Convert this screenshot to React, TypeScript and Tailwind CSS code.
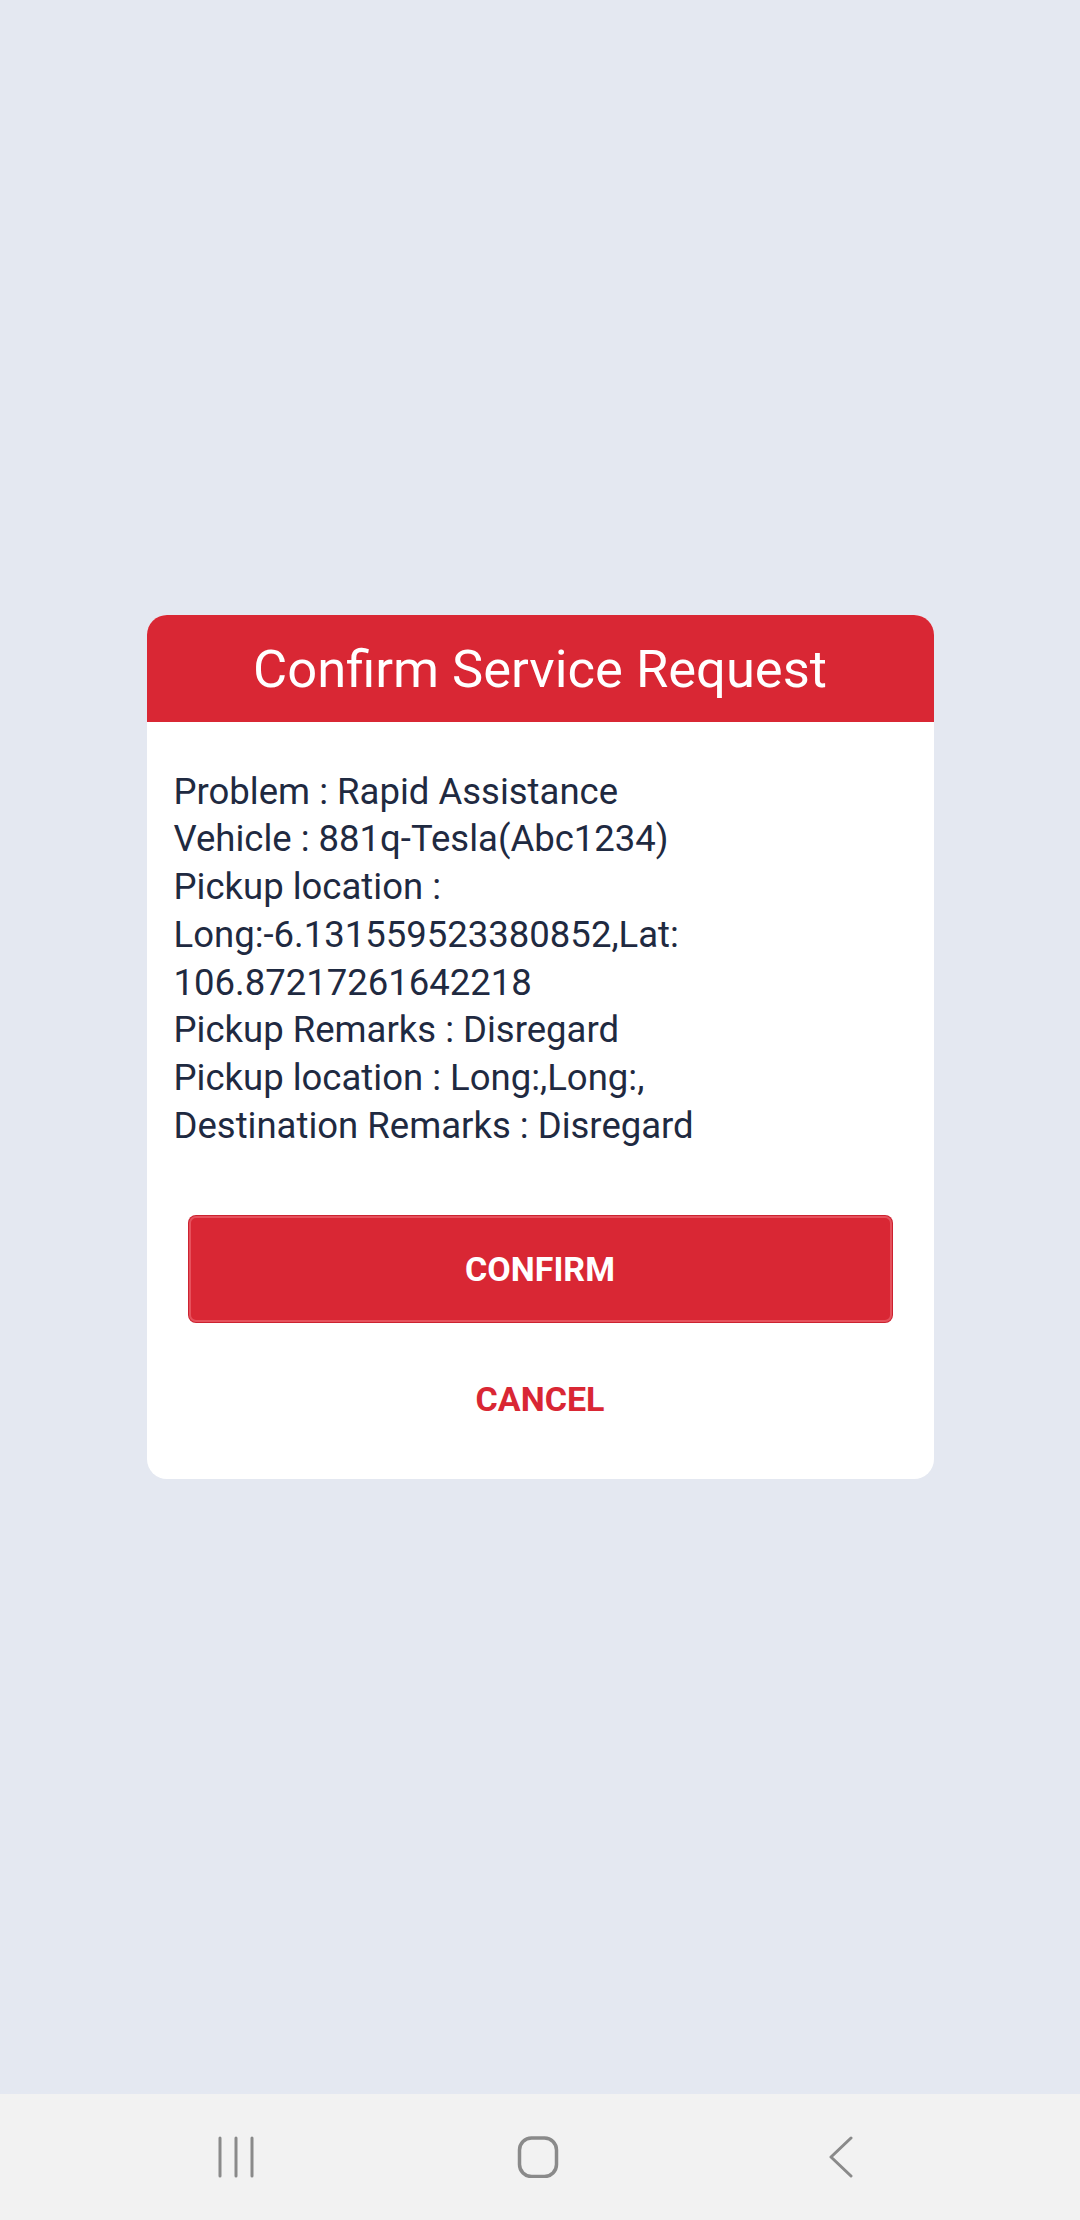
import React from "react";

const lines = [
  "Problem : Rapid Assistance",
  "Vehicle : 881q-Tesla(Abc1234)",
  "Pickup location :",
  "Long:-6.131559523380852,Lat:",
  "106.87217261642218",
  "Pickup Remarks : Disregard",
  "Pickup location : Long:,Long:,",
  "Destination Remarks : Disregard",
];

function NavBar() {
  return (
    <div className="h-[126px] bg-[#f2f2f2] flex items-center justify-center gap-[242px] pr-[4px]">
      <svg width="60" height="42" viewBox="0 0 60 42" fill="none" stroke="#8a8a8a" strokeWidth="3" strokeLinecap="round">
        <line x1="14" y1="2" x2="14" y2="40" />
        <line x1="30" y1="2" x2="30" y2="40" />
        <line x1="46" y1="2" x2="46" y2="40" />
      </svg>
      <svg width="60" height="42" viewBox="0 0 60 42" fill="none" stroke="#8a8a8a" strokeWidth="3.5">
        <rect x="11.5" y="2" width="37" height="38.5" rx="12" />
      </svg>
      <svg width="60" height="42" viewBox="0 0 60 42" fill="none" stroke="#8a8a8a" strokeWidth="3" strokeLinecap="round" strokeLinejoin="round">
        <polyline points="41,2 21,21 41,40" />
      </svg>
    </div>
  );
}

export default function App() {
  return (
    <div className="min-h-[2220px] w-[1080px] flex flex-col bg-[#e4e8f1] font-['Roboto','Liberation_Sans',sans-serif]">
      <div className="flex-1 flex items-center justify-center">
        <div className="w-[787px] bg-white rounded-[20px] overflow-hidden">
          <div className="h-[107px] bg-[#d92734] flex items-center justify-center">
            <h1 className="text-white text-[52.5px] leading-none pt-[2px]">Confirm Service Request</h1>
          </div>
          <div className="pt-[46px] pl-[27px] pr-[27px] text-[36.5px] leading-[47.7px] text-[#1f2a41]">
            {lines.map((l, i) => (
              <p key={i}>{l}</p>
            ))}
          </div>
          <div className="px-[42px] pt-[67px]">
            <button className="w-full h-[106px] rounded-[7px] bg-[#d92734] border-2 border-[#e6515c] shadow-[0_0_0_1px_#cc2230] text-white font-bold text-[34px]">
              CONFIRM
            </button>
          </div>
          <div className="pt-[53px] pb-[56px] flex justify-center">
            <span className="text-[#d92734] font-bold text-[34px] leading-[48px]">CANCEL</span>
          </div>
        </div>
      </div>
      <NavBar />
    </div>
  );
}
